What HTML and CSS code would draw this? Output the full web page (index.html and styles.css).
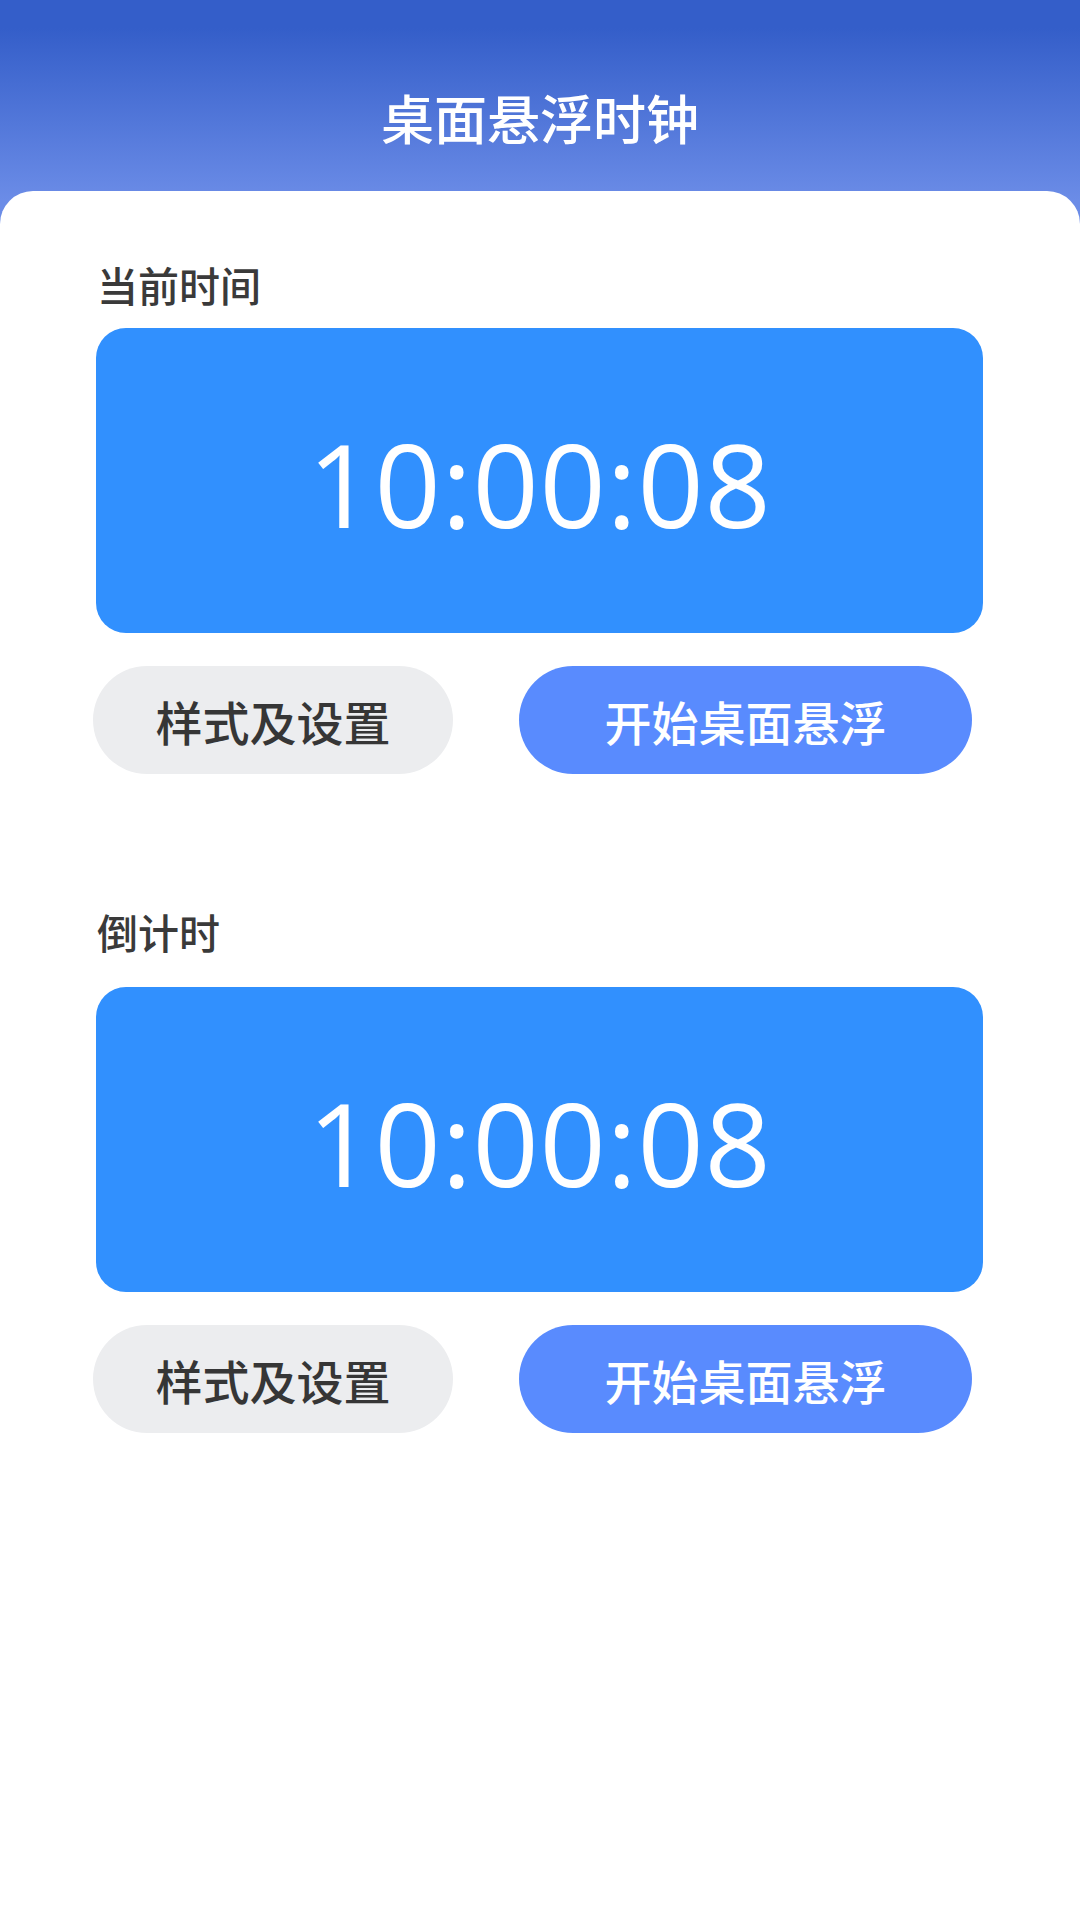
FILE: index.html
```html
<!DOCTYPE html>
<html lang="zh-CN">
<head>
<meta charset="utf-8">
<title>桌面悬浮时钟</title>
<link rel="stylesheet" href="styles.css">
</head>
<body>
<div class="page">
  <header class="header">
    <h1 class="title">桌面悬浮时钟</h1>
  </header>
  <main class="card">
    <section class="section">
      <div class="label">当前时间</div>
      <div class="clock"><span class="clock-text">10:00:08</span></div>
      <div class="actions">
        <button class="btn btn-gray">样式及设置</button>
        <button class="btn btn-blue">开始桌面悬浮</button>
      </div>
    </section>
    <section class="section section-countdown">
      <div class="label">倒计时</div>
      <div class="clock"><span class="clock-text">10:00:08</span></div>
      <div class="actions">
        <button class="btn btn-gray">样式及设置</button>
        <button class="btn btn-blue">开始桌面悬浮</button>
      </div>
    </section>
  </main>
</div>
</body>
</html>
```

FILE: styles.css
```css
* { box-sizing: border-box; }
html, body {
  margin: 0;
  padding: 0;
  background: #ffffff;
}
body {
  width: 1080px;
  height: 1920px;
  overflow: hidden;
  font-family: "Noto Sans CJK SC", "Noto Sans", sans-serif;
}
.page {
  min-height: 1920px;
  display: flex;
  flex-direction: column;
  background: linear-gradient(180deg, #345ec9 0px, #345ec9 28px, #6b8ce7 200px, #6b8ce7 240px) no-repeat;
  background-size: 100% 240px;
}
.header {
  height: 191px;
  padding-top: 44px;
  display: flex;
  align-items: center;
  justify-content: center;
  flex-shrink: 0;
}
.title {
  margin: 0;
  font-size: 53px;
  line-height: 1;
  font-weight: 500;
  color: #ffffff;
  letter-spacing: 0;
}
.card {
  flex: 1;
  background: #ffffff;
  border-radius: 33px 33px 0 0;
  padding: 65px 97px 0 96px;
}
.label {
  font-size: 41px;
  line-height: 56px;
  font-weight: 500;
  color: #3a3a3a;
  margin-left: 1px;
  margin-bottom: 16px;
}
.section-countdown {
  margin-top: 129px;
}
.section-countdown .label {
  margin-bottom: 28px;
}
.clock {
  height: 305px;
  border-radius: 30px;
  background: #3190fe;
  display: flex;
  align-items: center;
  justify-content: center;
  padding-top: 5px;
}
.clock-text {
  font-family: "Open Sans", "Noto Sans", sans-serif;
  font-size: 116px;
  line-height: 1;
  font-weight: 400;
  letter-spacing: 0.6px;
  color: #ffffff;
}
.actions {
  display: flex;
  gap: 66px;
  margin-top: 33px;
  margin-left: -3px;
}
.btn {
  height: 108px;
  border: none;
  border-radius: 54px;
  font-family: "Noto Sans CJK SC", "Noto Sans", sans-serif;
  font-size: 47px;
  font-weight: 500;
  line-height: 1;
  padding: 0;
  display: flex;
  align-items: center;
  justify-content: center;
}
.btn-gray {
  width: 360px;
  background: #ecedef;
  color: #363636;
}
.btn-blue {
  width: 453px;
  background: #598bfe;
  color: #ffffff;
}
```
